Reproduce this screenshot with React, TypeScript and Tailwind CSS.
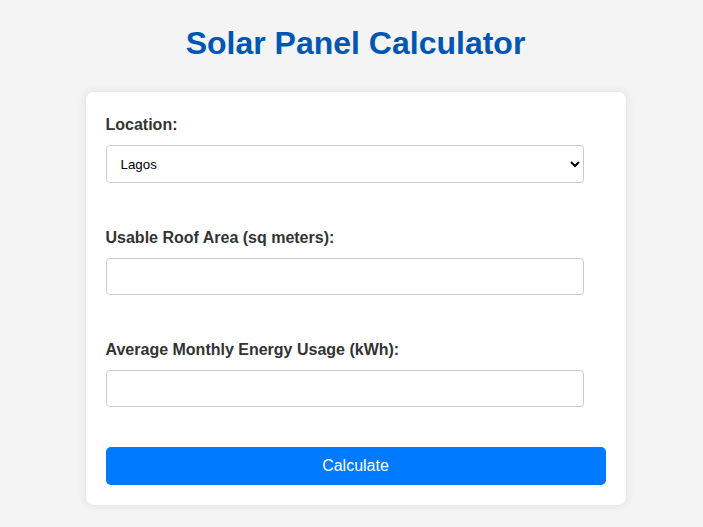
import { useState } from 'react'

const locations = ['Lagos', 'Abuja', 'Kano', 'Port Harcourt', 'Ibadan']

const App = () => {
  const [location, setLocation] = useState('Lagos')
  const [roofArea, setRoofArea] = useState('')
  const [usage, setUsage] = useState('')

  const handleSubmit = (e: React.FormEvent<HTMLFormElement>) => {
    e.preventDefault()
  }

  return (
    <div className="min-h-screen bg-[#f4f4f4] pt-[25px] pl-2 font-['Liberation_Sans',Arial,sans-serif]">
      <h1 className="text-center text-[32px] leading-[37px] font-bold text-[#0056b3]">Solar Panel Calculator</h1>

      <form
        className="mx-auto mt-[30px] w-[540px] rounded-lg bg-white px-5 pt-[24px] pb-[20px] shadow-[0_0_10px_rgba(0,0,0,0.1)]"
        onSubmit={handleSubmit}
      >
        <label htmlFor="location" className="block text-base leading-[18px] font-bold text-[#333]">Location:</label>
        <select
          id="location"
          className="mt-[11px] block h-[38px] w-[478px] rounded border border-[#ccc] bg-white px-[10px] text-[13.33px] text-black outline-none"
          value={location}
          onChange={(e) => setLocation(e.target.value)}
        >
          {locations.map((loc) => (
            <option key={loc} value={loc}>{loc}</option>
          ))}
        </select>

        <label htmlFor="roofArea" className="mt-[46px] block text-base leading-[18px] font-bold text-[#333]">Usable Roof Area (sq meters):</label>
        <input
          id="roofArea"
          type="number"
          className="mt-[11px] block h-[37px] w-[478px] rounded border border-[#ccc] px-[10px] text-base outline-none"
          value={roofArea}
          onChange={(e) => setRoofArea(e.target.value)}
        />

        <label htmlFor="usage" className="mt-[46px] block text-base leading-[18px] font-bold text-[#333]">Average Monthly Energy Usage (kWh):</label>
        <input
          id="usage"
          type="number"
          className="mt-[11px] block h-[37px] w-[478px] rounded border border-[#ccc] px-[10px] text-base outline-none"
          value={usage}
          onChange={(e) => setUsage(e.target.value)}
        />

        <button
          type="submit"
          className="mt-10 block h-[38px] w-full rounded-[5px] bg-[#007bff] text-base text-white hover:bg-[#0069d9]"
        >
          Calculate
        </button>
      </form>
    </div>
  )
}

export default App
